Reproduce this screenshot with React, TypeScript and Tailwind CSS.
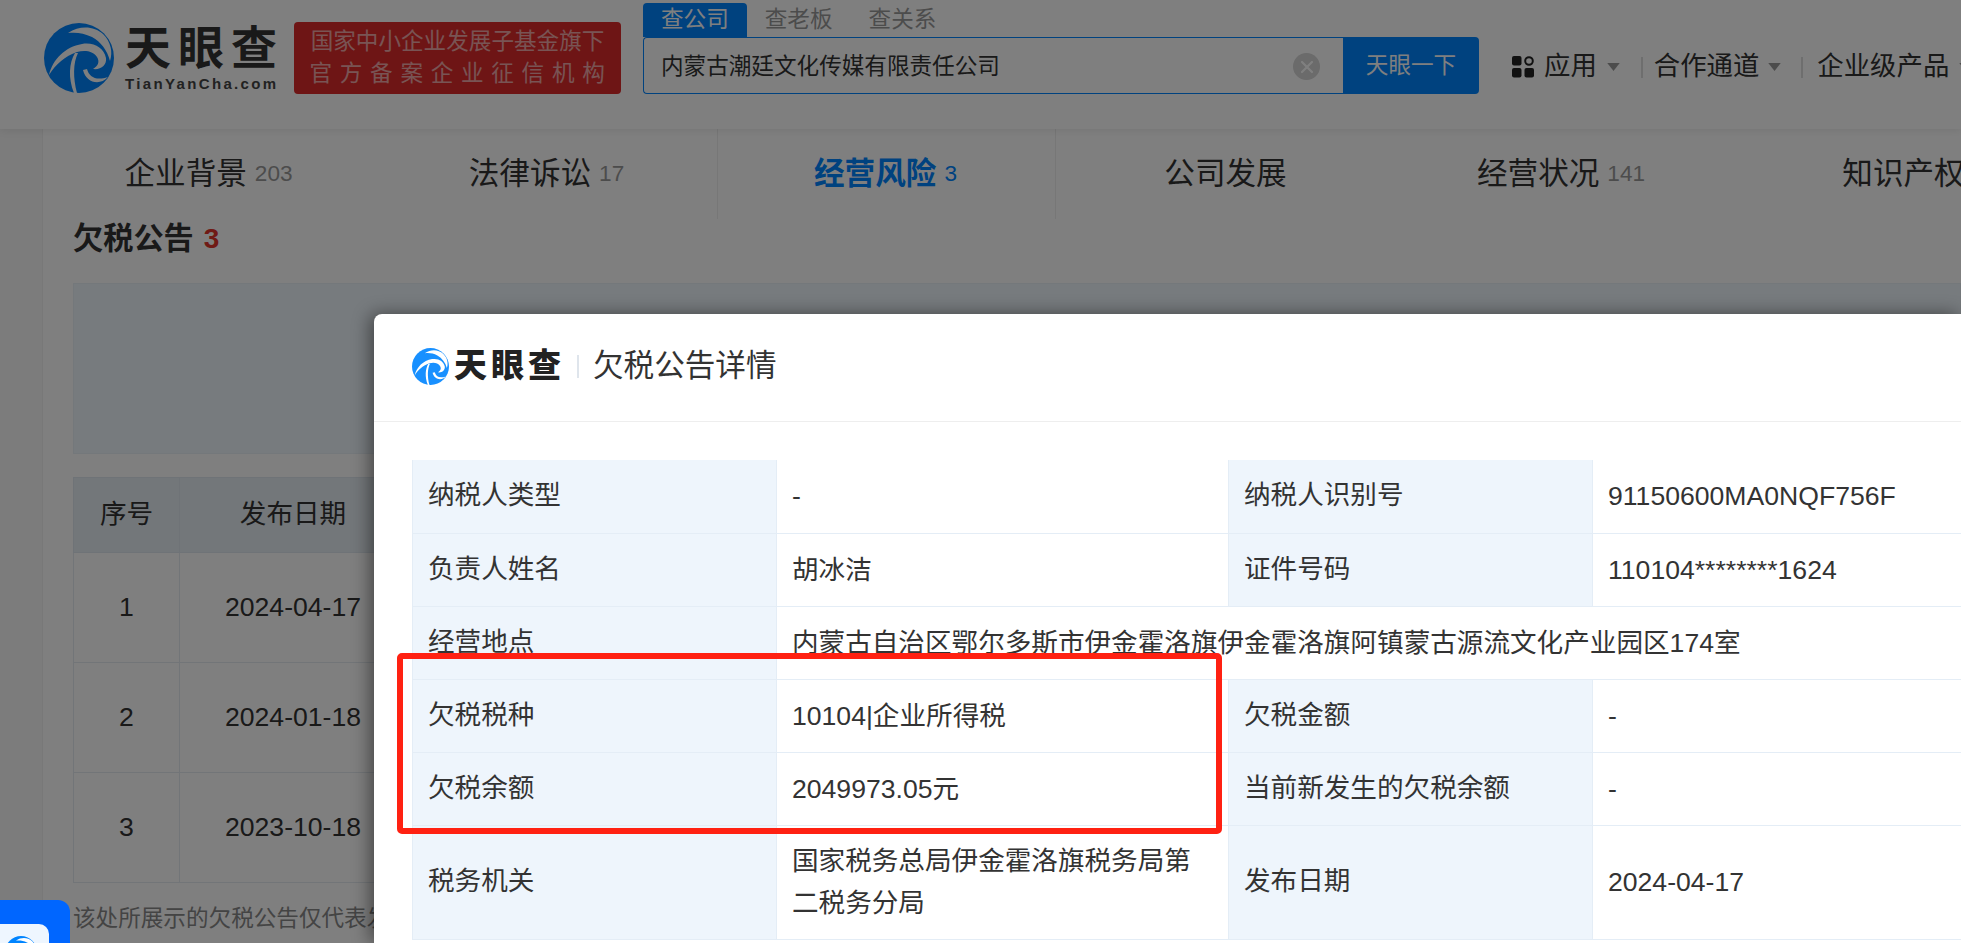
import React from 'react';

const font = "font-['Liberation_Sans','Noto_Sans_CJK_SC',sans-serif]";

function Swirl({ className, color }: { className?: string; color: string }) {
  return (
    <svg viewBox="0 0 70 70" className={className}>
      <circle cx="35" cy="35" r="35" fill={color} />
      <path d="M24 10C36 2 50 3 59 11C67 19 69 29 66 38C63 27 57 19 48 14C40 10 32 9 24 10Z" fill="#fff" />
      <path d="M5 52C9 36 21 24 38 21C50 19 60 25 62 35C63 42 57 47 49 46C54 43 56 39 53 34C49 28 41 27 33 29C21 33 12 41 5 52Z" fill="#fff" />
      <path d="M34 30C29 40 29 55 33 70L30 70C24 55 25 40 31 30Z" fill="#fff" />
      <path d="M43 46C45 54 52 58 64 54C56 63 42 60 39 47Z" fill="#fff" />
    </svg>
  );
}

function Caret({ className }: { className?: string }) {
  return (
    <svg viewBox="0 0 14 9" className={className}>
      <path d="M0 0H14L7 9Z" fill="#999" />
    </svg>
  );
}

const navTabs = [
  { name: '企业背景', count: '203', pad: '' },
  { name: '法律诉讼', count: '17', pad: 'pr-[2px]' },
  { name: '经营风险', count: '3', active: true, pad: 'pr-[2px]' },
  { name: '公司发展', pad: '' },
  { name: '经营状况', count: '141', pad: 'pr-[7px]' },
  { name: '知识产权', pad: '' },
];

const listRows = [
  { no: 1, date: '2024-04-17' },
  { no: 2, date: '2024-01-18' },
  { no: 3, date: '2023-10-18' },
];

function Label({ children }: { children: React.ReactNode }) {
  return <td className="bg-[#eef5fc] border border-t-0 border-[#e4edf6] px-[15px] align-middle">{children}</td>;
}

function Value({ children, span }: { children: React.ReactNode; span?: number }) {
  return (
    <td colSpan={span} className="border border-t-0 border-[#e4edf6] px-[15px] align-middle leading-[42px]">
      {children}
    </td>
  );
}

export default function App() {
  return (
    <div className={`relative w-full h-[943px] overflow-hidden bg-white text-[#333] ${font}`}>
      <header className="relative z-10 h-[129px] flex items-start bg-white shadow-[0_2px_8px_rgba(0,0,0,0.08)] whitespace-nowrap">
        <div className="flex shrink-0 ml-[44px] mt-[23px]">
          <Swirl className="w-[70px] h-[70px]" color="#0084ff" />
          <div className="ml-[11px] w-[152px] flex flex-col">
            <div className="h-[50px] text-[46px] leading-[50px] font-bold tracking-[7px] text-[#333]">天眼查</div>
            <div className="mt-[2px] text-[15px] leading-[18px] font-bold tracking-[2.35px] text-[#444]">TianYanCha.com</div>
          </div>
        </div>
        <div className="shrink-0 ml-[17px] mt-[22px] w-[327px] h-[72px] rounded-[4px] bg-[#dd2a2a] flex flex-col items-center justify-center text-white/60 text-[22.6px] leading-[32px]">
          <div>国家中小企业发展子基金旗下</div>
          <div className="tracking-[7.7px] mr-[-7px]">官方备案企业征信机构</div>
        </div>
        <div className="shrink-0 ml-[22px] mt-[3px] flex flex-col w-[836px]">
          <div className="flex h-[34px] text-[22.6px] leading-[34px] text-[#999]">
            <div className="px-[18px] bg-[#0084ff] text-white rounded-t-[4px]">查公司</div>
            <div className="px-[18px]">查老板</div>
            <div className="px-[18px]">查关系</div>
          </div>
          <div className="flex h-[57px]">
            <div className="flex-1 flex items-center justify-between border border-[#0084ff] border-r-0 rounded-l-[4px] pl-[17px] pr-[23px] pt-[2px] text-[22.6px]">
              <span>内蒙古潮廷文化传媒有限责任公司</span>
              <span className="w-[27px] h-[27px] rounded-full bg-[#d6d6d6] flex items-center justify-center">
                <svg viewBox="0 0 14 14" className="w-[14px] h-[14px]">
                  <path d="M2 2L12 12M12 2L2 12" stroke="#fff" strokeWidth="2.2" strokeLinecap="round" />
                </svg>
              </span>
            </div>
            <div className="w-[136px] bg-[#0084ff] rounded-r-[4px] text-white text-[22.6px] flex items-center justify-center">天眼一下</div>
          </div>
        </div>
        <div className="ml-[33px] mt-[47px] h-[40px] flex items-center text-[26.4px] text-[#333]">
          <svg viewBox="0 0 22 22" className="w-[22px] h-[22px] shrink-0">
            <rect x="0" y="0" width="9.5" height="9.5" rx="2" fill="#222" />
            <circle cx="17" cy="5" r="3.8" fill="none" stroke="#222" strokeWidth="2" />
            <rect x="0" y="12" width="9.5" height="9.5" rx="2" fill="#222" />
            <rect x="12.5" y="12" width="9.5" height="9.5" rx="2" fill="#222" />
          </svg>
          <span className="ml-[10px]">应用</span>
          <Caret className="ml-[10px] w-[13px] h-[8px] shrink-0" />
          <div className="ml-[21px] w-[2px] h-[21px] bg-[#ddd] shrink-0" />
          <span className="ml-[11px]">合作通道</span>
          <Caret className="ml-[9px] w-[13px] h-[8px] shrink-0" />
          <div className="ml-[20px] w-[2px] h-[21px] bg-[#ddd] shrink-0" />
          <span className="ml-[14px]">企业级产品</span>
          <Caret className="ml-[10px] w-[13px] h-[8px] shrink-0" />
        </div>
      </header>

      <div className="flex">
        <div className="w-[43px] shrink-0 h-[814px] bg-[#f8f8f8] border-r border-[#f0f0f0]" />
        <main className="flex-1 min-w-0 whitespace-nowrap">
          <nav className="flex h-[90px] ml-[-4px]">
            {navTabs.map((t) => (
              <div
                key={t.name}
                className={`w-[339px] shrink-0 flex items-center justify-center text-[30.6px] ${t.pad} ${t.active ? 'border-x border-[#eeeeee] font-bold text-[#0084ff]' : ''}`}
              >
                <span>{t.name}</span>
                {t.count && (
                  <span className={`ml-[8px] text-[22.6px] font-normal ${t.active ? 'text-[#0084ff]' : 'text-[#999]'}`}>{t.count}</span>
                )}
              </div>
            ))}
          </nav>
          <div className="pl-[30px]">
            <div className="h-[40px] flex items-center font-bold">
              <span className="text-[30.2px]">欠税公告</span>
              <span className="ml-[10px] text-[28px] text-[#e0352b]">3</span>
            </div>
            <div className="mt-[24px] h-[171px] bg-[#eef6fc] border border-[#e8f0f6]" />
            <table className="mt-[23px] w-[1850px] table-fixed border-collapse text-[26.6px] text-center">
              <thead>
                <tr className="h-[75px] bg-[#e6eef4]">
                  <th className="w-[106px] border border-[#dfe7ee] font-normal">序号</th>
                  <th className="w-[227px] border border-[#dfe7ee] font-normal">发布日期</th>
                  <th className="border border-[#dfe7ee]" />
                </tr>
              </thead>
              <tbody>
                {listRows.map((r) => (
                  <tr key={r.no} className="h-[110px]">
                    <td className="border border-[#e4eaf0]">{r.no}</td>
                    <td className="border border-[#e4eaf0]">{r.date}</td>
                    <td className="border border-[#e4eaf0]" />
                  </tr>
                ))}
              </tbody>
            </table>
            <div className="mt-[20px] h-[32px] text-[22.6px] leading-[32px] text-[#888]">该处所展示的欠税公告仅代表发布时的状态</div>
          </div>
        </main>
      </div>

      <div className="absolute inset-0 z-20 bg-black/50" />

      <div className="absolute z-30 left-0 top-[900px] w-[70px] h-[60px] bg-[#0066ff] rounded-tr-[12px]">
        <div className="mt-[24px] w-[49px] h-[36px] bg-[#eef6ff] rounded-tr-[10px] overflow-hidden pl-[5px] pt-[12px]">
          <Swirl className="w-[32px] h-[32px]" color="#0084ff" />
        </div>
      </div>

      <section className="absolute z-30 left-[374px] top-[314px] right-0 bottom-0 bg-white rounded-tl-[8px] shadow-[-4px_0_18px_rgba(0,0,0,0.45)] overflow-hidden whitespace-nowrap">
        <div className="h-[108px] border-b border-[#eeeeee] flex items-center pl-[38px] pb-[3px]">
          <Swirl className="w-[37px] h-[37px]" color="#1890ff" />
          <span className="ml-[5px] text-[33px] font-black tracking-[4px] text-[#222]">天眼查</span>
          <div className="ml-[12px] w-[2px] h-[23px] bg-[#dfe5ec]" />
          <span className="ml-[14px] text-[30.6px] text-[#333]">欠税公告详情</span>
        </div>
        <div className="pl-[38px] pt-[38px]">
          <table className="w-[1700px] table-fixed border-collapse text-[26.6px] text-[#333]">
            <colgroup>
              <col className="w-[364px]" />
              <col className="w-[452px]" />
              <col className="w-[364px]" />
              <col />
            </colgroup>
            <tbody>
              <tr className="h-[73px]">
                <Label>纳税人类型</Label>
                <Value>-</Value>
                <Label>纳税人识别号</Label>
                <Value>91150600MA0NQF756F</Value>
              </tr>
              <tr className="h-[73px]">
                <Label>负责人姓名</Label>
                <Value>胡冰洁</Value>
                <Label>证件号码</Label>
                <Value>110104********1624</Value>
              </tr>
              <tr className="h-[73px]">
                <Label>经营地点</Label>
                <Value span={3}>内蒙古自治区鄂尔多斯市伊金霍洛旗伊金霍洛旗阿镇蒙古源流文化产业园区174室</Value>
              </tr>
              <tr className="h-[73px]">
                <Label>欠税税种</Label>
                <Value>10104|企业所得税</Value>
                <Label>欠税金额</Label>
                <Value>-</Value>
              </tr>
              <tr className="h-[73px]">
                <Label>欠税余额</Label>
                <Value>2049973.05元</Value>
                <Label>当前新发生的欠税余额</Label>
                <Value>-</Value>
              </tr>
              <tr className="h-[114px]">
                <Label>税务机关</Label>
                <td className="border border-t-0 border-[#e4edf6] px-[15px] leading-[42px] whitespace-normal">国家税务总局伊金霍洛旗税务局第二税务分局</td>
                <Label>发布日期</Label>
                <Value>2024-04-17</Value>
              </tr>
            </tbody>
          </table>
        </div>
      </section>

      <div className="absolute z-40 left-[397px] top-[653px] w-[825px] h-[181px] border-[6px] border-[#ff2112] rounded-[5px]" />
    </div>
  );
}
